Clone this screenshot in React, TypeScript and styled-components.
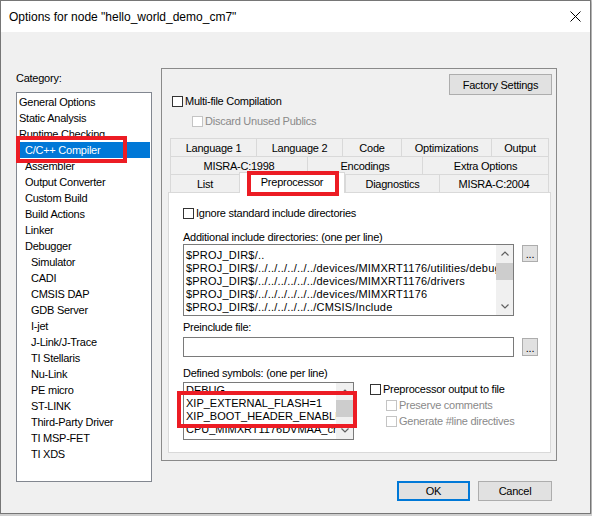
import React from 'react';
import styled, { createGlobalStyle, css } from 'styled-components';

const GlobalStyle = createGlobalStyle`
  html, body {
    margin: 0;
    padding: 0;
    background: #cfcfcf;
  }
  body {
    font-family: "Liberation Sans", Arial, sans-serif;
    font-size: 11px;
    letter-spacing: -0.25px;
    color: #000;
  }
`;

const Window = styled.div`
  width: 589px;
  height: 512px;
  border: 1px solid #767676;
  background: #f0f0f0;
  display: flex;
  flex-direction: column;
  box-shadow: 0 1px 3px rgba(0, 0, 0, 0.35);
`;

const TitleBar = styled.div`
  height: 31px;
  background: #fff;
  display: flex;
  align-items: center;
  padding-left: 8px;
  padding-right: 9px;
  font-size: 12px;
  letter-spacing: 0;
  flex: none;
  .title {
    flex: 1;
  }
`;

const Body = styled.div`
  flex: 1;
  display: flex;
  padding-left: 15px;
`;

const LeftCol = styled.div`
  width: 136px;
  padding-top: 39px;
  display: flex;
  flex-direction: column;
`;

const Label = styled.div<{ $mt?: number; $mb?: number }>`
  line-height: 14px;
  height: 14px;
  margin-top: ${p => p.$mt ?? 0}px;
  margin-bottom: ${p => p.$mb ?? 0}px;
  white-space: nowrap;
`;

const ListBox = styled.div`
  height: 390px;
  box-sizing: border-box;
  border: 1px solid #828790;
  background: #fff;
  padding-top: 1px;
`;

const ListItem = styled.div<{ $level: number; $selected?: boolean }>`
  position: relative;
  height: 16px;
  line-height: 16px;
  margin-right: 1px;
  padding-left: ${p => [2, 8, 14][p.$level]}px;
  white-space: nowrap;
  ${p => p.$selected && css`
    background: #0078d7;
    color: #fff;
  `}
`;

const RedMark = styled.span<{ $l: number; $t: number; $w: number; $h: number }>`
  position: absolute;
  left: ${p => p.$l}px;
  top: ${p => p.$t}px;
  width: ${p => p.$w}px;
  height: ${p => p.$h}px;
  box-sizing: border-box;
  border: 4px solid #ec1c24;
  pointer-events: none;
  z-index: 5;
`;

const RightCol = styled.div`
  margin-left: 9px;
  padding-top: 36px;
  display: flex;
  flex-direction: column;
`;

const Panel = styled.div`
  width: 396px;
  height: 393px;
  box-sizing: border-box;
  border: 1px solid #8a8a8a;
  padding: 5px 5px 0 6px;
  display: flex;
  flex-direction: column;
`;

const ButtonRow = styled.div<{ $mt?: number }>`
  display: flex;
  justify-content: flex-end;
  gap: 8px;
  margin-top: ${p => p.$mt ?? 0}px;
`;

const Button = styled.div<{ $w: number; $h?: number; $default?: boolean }>`
  width: ${p => p.$w}px;
  height: ${p => p.$h ?? 21}px;
  box-sizing: border-box;
  border: 1px solid #adadad;
  background: #e1e1e1;
  display: flex;
  align-items: center;
  justify-content: center;
  flex: none;
  ${p => p.$default && css`
    border: 2px solid #0078d7;
  `}
`;

const CheckRow = styled.div<{ $indent?: number; $mt?: number; $disabled?: boolean; $h?: number }>`
  display: flex;
  align-items: center;
  gap: 2px;
  height: ${p => p.$h ?? 13}px;
  line-height: 13px;
  margin-top: ${p => p.$mt ?? 0}px;
  padding-left: ${p => p.$indent ?? 0}px;
  white-space: nowrap;
  color: ${p => (p.$disabled ? '#8a8a8a' : '#000')};
`;

const Box = styled.span<{ $disabled?: boolean }>`
  width: 11px;
  height: 11px;
  box-sizing: border-box;
  border: 1px solid ${p => (p.$disabled ? '#c4c4c4' : '#333')};
  background: #fff;
  flex: none;
`;

const TabStrip = styled.div`
  margin-top: 10px;
  margin-left: 2px;
  width: 379px;
  display: flex;
  flex-direction: column;
`;

const TabRow = styled.div`
  display: flex;
  height: 18px;
`;

const Tab = styled.div<{ $w: number; $active?: boolean }>`
  position: relative;
  flex: 0 0 ${p => p.$w}px;
  box-sizing: border-box;
  border: 1px solid #d9d9d9;
  border-right: none;
  border-bottom: none;
  background: #f0f0f0;
  display: flex;
  align-items: center;
  justify-content: center;
  white-space: nowrap;
  &:last-child {
    border-right: 1px solid #d9d9d9;
  }
  ${p => p.$active && css`
    background: #fff;
    margin-top: -2px;
    height: 21px;
    z-index: 2;
    border-right: 1px solid #d9d9d9;
    padding-bottom: 3px;
  `}
`;

const TabPage = styled.div`
  width: 383px;
  height: 261px;
  box-sizing: border-box;
  border: 1px solid #d9d9d9;
  background: #fff;
  padding: 14px 0 0 14px;
  display: flex;
  flex-direction: column;
`;

const FieldRow = styled.div`
  display: flex;
  align-items: flex-start;
`;

const TextBox = styled.div<{ $w: number; $h: number }>`
  position: relative;
  width: ${p => p.$w}px;
  height: ${p => p.$h}px;
  box-sizing: border-box;
  border: 1px solid #7a7a7a;
  background: #fff;
  display: flex;
  flex: none;
`;

const Lines = styled.div<{ $pt: number; $ls?: number }>`
  flex: 1;
  min-width: 0;
  overflow: hidden;
  padding: ${p => p.$pt}px 0 0 2px;
  line-height: 13px;
  letter-spacing: ${p => p.$ls ?? 0}px;
  white-space: nowrap;
`;

const ScrollBar = styled.div`
  width: 17px;
  flex: none;
  background: #f0f0f0;
  display: flex;
  flex-direction: column;
`;

const ScrollArrow = styled.div`
  height: 17px;
  display: flex;
  align-items: center;
  justify-content: center;
  flex: none;
`;

const Track = styled.div`
  flex: 1;
`;

const Thumb = styled.div<{ $mt: number; $h: number }>`
  margin-top: ${p => p.$mt}px;
  height: ${p => p.$h}px;
  background: #cdcdcd;
`;

const Browse = styled(Button)`
  margin-left: 8px;
  margin-top: 1px;
  align-items: flex-end;
  padding-bottom: 3px;
  line-height: 8px;
`;

const OptionCol = styled.div`
  margin-left: 16px;
  margin-top: -1px;
  display: flex;
  flex-direction: column;
`;

const Chevron = ({ up }: { up?: boolean }) => (
  <svg width="8" height="5" viewBox="0 0 8 5">
    <path
      d={up ? 'M0.5 4.5 L4 1 L7.5 4.5' : 'M0.5 0.5 L4 4 L7.5 0.5'}
      fill="none"
      stroke="#606060"
      strokeWidth="1.2"
    />
  </svg>
);

const Scroll = ({ thumbTop, thumbH }: { thumbTop: number; thumbH: number }) => (
  <ScrollBar>
    <ScrollArrow><Chevron up /></ScrollArrow>
    <Track><Thumb $mt={thumbTop} $h={thumbH} /></Track>
    <ScrollArrow><Chevron /></ScrollArrow>
  </ScrollBar>
);

const categories: { label: string; level: number; selected?: boolean }[] = [
  { label: 'General Options', level: 0 },
  { label: 'Static Analysis', level: 0 },
  { label: 'Runtime Checking', level: 0 },
  { label: 'C/C++ Compiler', level: 1, selected: true },
  { label: 'Assembler', level: 1 },
  { label: 'Output Converter', level: 1 },
  { label: 'Custom Build', level: 1 },
  { label: 'Build Actions', level: 1 },
  { label: 'Linker', level: 1 },
  { label: 'Debugger', level: 1 },
  { label: 'Simulator', level: 2 },
  { label: 'CADI', level: 2 },
  { label: 'CMSIS DAP', level: 2 },
  { label: 'GDB Server', level: 2 },
  { label: 'I-jet', level: 2 },
  { label: 'J-Link/J-Trace', level: 2 },
  { label: 'TI Stellaris', level: 2 },
  { label: 'Nu-Link', level: 2 },
  { label: 'PE micro', level: 2 },
  { label: 'ST-LINK', level: 2 },
  { label: 'Third-Party Driver', level: 2 },
  { label: 'TI MSP-FET', level: 2 },
  { label: 'TI XDS', level: 2 },
];

const tabRows: { label: string; w: number; active?: boolean }[][] = [
  [
    { label: 'Language 1', w: 86 },
    { label: 'Language 2', w: 86 },
    { label: 'Code', w: 59 },
    { label: 'Optimizations', w: 90 },
    { label: 'Output', w: 58 },
  ],
  [
    { label: 'MISRA-C:1998', w: 137 },
    { label: 'Encodings', w: 115 },
    { label: 'Extra Options', w: 127 },
  ],
  [
    { label: 'List', w: 69 },
    { label: 'Preprocessor', w: 106, active: true },
    { label: 'Diagnostics', w: 94 },
    { label: 'MISRA-C:2004', w: 110 },
  ],
];

const includeDirs = [
  '$PROJ_DIR$/..',
  '$PROJ_DIR$/../../../../../../devices/MIMXRT1176/utilities/debug_console',
  '$PROJ_DIR$/../../../../../../devices/MIMXRT1176/drivers',
  '$PROJ_DIR$/../../../../../../devices/MIMXRT1176',
  '$PROJ_DIR$/../../../../../../CMSIS/Include',
];

const symbols = [
  'DEBUG',
  'XIP_EXTERNAL_FLASH=1',
  'XIP_BOOT_HEADER_ENABLE=1',
  'CPU_MIMXRT1176DVMAA_cm7',
];

const App = () => {
  return (
    <>
      <GlobalStyle />
      <Window>
        <TitleBar>
          <span className="title">Options for node "hello_world_demo_cm7"</span>
          <svg width="11" height="11" viewBox="0 0 11 11">
            <path d="M0.5 0.5 L10.5 10.5 M10.5 0.5 L0.5 10.5" stroke="#000" strokeWidth="1" />
          </svg>
        </TitleBar>
        <Body>
          <LeftCol>
            <Label $mb={7}>Category:</Label>
            <ListBox>
              {categories.map(c => (
                <ListItem key={c.label} $level={c.level} $selected={c.selected}>
                  {c.label}
                  {c.selected && <RedMark $l={-1} $t={-6} $w={111} $h={27} />}
                </ListItem>
              ))}
            </ListBox>
          </LeftCol>
          <RightCol>
            <Panel>
              <ButtonRow>
                <Button $w={103} style={{ marginRight: -1 }}>Factory Settings</Button>
              </ButtonRow>
              <CheckRow $indent={4}>
                <Box />
                <span>Multi-file Compilation</span>
              </CheckRow>
              <CheckRow $indent={24} $mt={7} $disabled>
                <Box $disabled />
                <span>Discard Unused Publics</span>
              </CheckRow>
              <TabStrip>
                {tabRows.map((row, i) => (
                  <TabRow key={i}>
                    {row.map(t => (
                      <Tab key={t.label} $w={t.w} $active={t.active}>
                        {t.label}
                        {t.active && <RedMark $l={7} $t={-2} $w={92} $h={25} />}
                      </Tab>
                    ))}
                  </TabRow>
                ))}
              </TabStrip>
              <TabPage>
                <CheckRow>
                  <Box />
                  <span>Ignore standard include directories</span>
                </CheckRow>
                <Label $mt={10}>Additional include directories: (one per line)</Label>
                <FieldRow>
                  <TextBox $w={331} $h={72}>
                    <Lines $pt={4} $ls={0.2}>
                      {includeDirs.map(d => <div key={d}>{d}</div>)}
                    </Lines>
                    <Scroll thumbTop={1} thumbH={17} />
                  </TextBox>
                  <Browse $w={16} $h={17}>...</Browse>
                </FieldRow>
                <Label $mt={4} $mb={3}>Preinclude file:</Label>
                <FieldRow>
                  <TextBox $w={331} $h={20} />
                  <Browse $w={16} $h={18}>...</Browse>
                </FieldRow>
                <Label $mt={9} $mb={2}>Defined symbols: (one per line)</Label>
                <FieldRow>
                  <TextBox $w={171} $h={58}>
                    <Lines $pt={1}>
                      {symbols.map(s => <div key={s}>{s}</div>)}
                    </Lines>
                    <Scroll thumbTop={0} thumbH={17} />
                    <RedMark $l={-7} $t={8} $w={180} $h={37} />
                  </TextBox>
                  <OptionCol>
                    <CheckRow $h={16}>
                      <Box />
                      <span>Preprocessor output to file</span>
                    </CheckRow>
                    <CheckRow $h={16} $indent={16} $disabled>
                      <Box $disabled />
                      <span>Preserve comments</span>
                    </CheckRow>
                    <CheckRow $h={16} $indent={16} $disabled>
                      <Box $disabled />
                      <span>Generate #line directives</span>
                    </CheckRow>
                  </OptionCol>
                </FieldRow>
              </TabPage>
            </Panel>
            <ButtonRow $mt={20} style={{ paddingRight: 5 }}>
              <Button $w={73} $h={20} $default>OK</Button>
              <Button $w={74} $h={20}>Cancel</Button>
            </ButtonRow>
          </RightCol>
        </Body>
      </Window>
    </>
  );
};

export default App;
